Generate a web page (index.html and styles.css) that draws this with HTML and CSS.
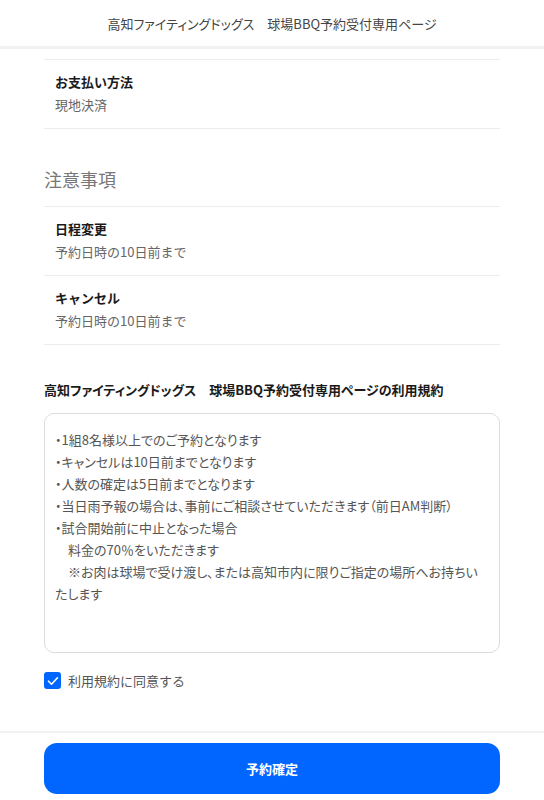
FILE: index.html
```html
<!DOCTYPE html>
<html lang="ja">
<head>
  <meta charset="UTF-8">
  <meta name="viewport" content="width=device-width, initial-scale=1.0">
  <title>球場BBQ予約受付専用ページ</title>
  <link rel="stylesheet" href="styles.css">
</head>
<body>
  <header class="site-header">高知ファイティングドッグス　球場BBQ予約受付専用ページ</header>

  <main class="content">
    <dl class="info-list first">
      <div class="info-row">
        <dt>お支払い方法</dt>
        <dd>現地決済</dd>
      </div>
    </dl>

    <h2 class="section-title">注意事項</h2>
    <dl class="info-list">
      <div class="info-row">
        <dt>日程変更</dt>
        <dd>予約日時の10日前まで</dd>
      </div>
      <div class="info-row">
        <dt>キャンセル</dt>
        <dd>予約日時の10日前まで</dd>
      </div>
    </dl>

    <h3 class="terms-title">高知ファイティングドッグス　球場BBQ予約受付専用ページの利用規約</h3>
    <div class="terms-box">
      <p>・1組8名様以上でのご予約となります</p>
      <p>・キャンセルは10日前までとなります</p>
      <p>・人数の確定は5日前までとなります</p>
      <p>・当日雨予報の場合は、事前にご相談させていただきます（前日AM判断）</p>
      <p>・試合開始前に中止となった場合</p>
      <p>　料金の70％をいただきます</p>
      <p>　※お肉は球場で受け渡し、または高知市内に限りご指定の場所へお持ちいたします</p>
    </div>

    <label class="agree">
      <span class="check">
        <svg width="12" height="10" viewBox="0 0 12 10"><path d="M1.5 5.2 L4.5 8.2 L10.5 1.8" fill="none" stroke="#fff" stroke-width="1.6" stroke-linecap="round" stroke-linejoin="round"/></svg>
      </span>
      利用規約に同意する
    </label>
  </main>

  <footer class="footer">
    <button class="submit-button">予約確定</button>
  </footer>
</body>
</html>
```

FILE: styles.css
```css
body {
  margin: 0;
  background: #fff;
  color: #222;
  font-family: "Noto Sans CJK JP", "Noto Sans", sans-serif;
  width: 544px;
}

.site-header {
  height: 46px;
  display: flex;
  align-items: center;
  justify-content: center;
  font-size: 13px;
  font-feature-settings: "palt";
  color: #444;
  border-bottom: 3px solid #f2f2f2;
}

.content {
  padding: 10px 44px 0;
}

.info-list {
  margin: 0;
  border-top: 1px solid #ececec;
}

.info-row {
  padding: 12px 11px 13px;
  border-bottom: 1px solid #ececec;
}

.info-row dt {
  font-size: 13px;
  font-weight: bold;
  color: #1a1a1a;
  line-height: 20px;
}

.info-row dd {
  margin: 3px 0 0;
  font-size: 13px;
  color: #666;
  line-height: 20px;
}

.section-title {
  margin: 38px 0 15px;
  font-size: 18px;
  font-weight: normal;
  color: #777;
  line-height: 24px;
}

.terms-title {
  margin: 35px 0 13px;
  font-size: 13px;
  font-weight: bold;
  font-feature-settings: "palt";
  color: #1a1a1a;
  line-height: 20px;
}

.terms-box {
  box-sizing: border-box;
  height: 240px;
  border: 1px solid #dcdcdc;
  border-radius: 10px;
  padding: 15px 10px 8px;
  font-size: 13px;
  font-feature-settings: "palt";
  color: #555;
  line-height: 22px;
}

.terms-box p {
  margin: 0;
}

.agree {
  display: flex;
  align-items: center;
  gap: 7px;
  margin-top: 18px;
  font-size: 13px;
  color: #555;
}

.check {
  width: 17px;
  height: 17px;
  border-radius: 3px;
  background: #0066ff;
  display: flex;
  align-items: center;
  justify-content: center;
}

.footer {
  margin-top: 41px;
  border-top: 2px solid #f2f2f2;
  padding: 10px 44px 6px;
}

.submit-button {
  width: 100%;
  height: 51px;
  border: none;
  border-radius: 13px;
  background: #0066ff;
  color: #fff;
  font-family: inherit;
  font-size: 13px;
  font-weight: bold;
}
```
